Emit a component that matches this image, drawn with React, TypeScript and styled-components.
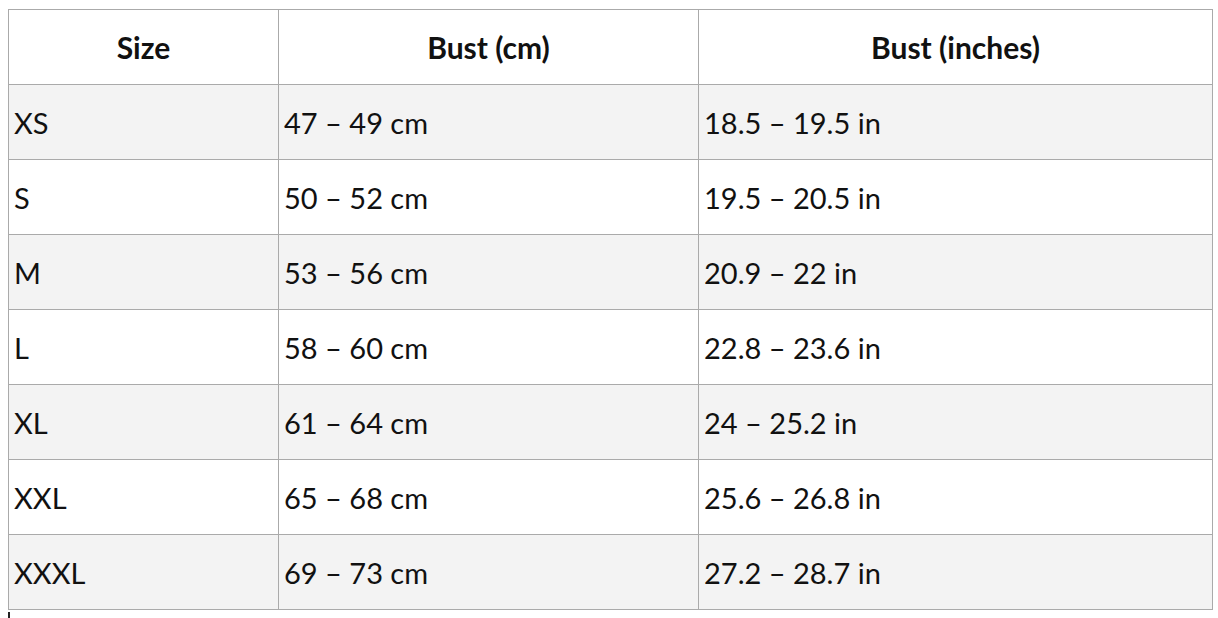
import styled, { createGlobalStyle } from 'styled-components';

const GlobalStyle = createGlobalStyle`
  html {
    overflow: hidden;
  }
  body {
    margin: 0;
    background: #fff;
    font-family: Lato, "Noto Sans", sans-serif;
    color: #111;
  }
`;

const Page = styled.div`
  width: 1218px;
  padding: 9px 0 0 8px;
  box-sizing: border-box;
`;

const Table = styled.table`
  width: 1204px;
  border-collapse: collapse;
  table-layout: fixed;
  font-size: 29px;
`;

const HeadCell = styled.th`
  height: 74px;
  padding: 0 5px;
  border: 1px solid #aaa;
  text-align: center;
  font-size: 30px;
  font-weight: 700;
  vertical-align: middle;
`;

const Row = styled.tr<{ $shaded: boolean }>`
  background: ${(p) => (p.$shaded ? '#f3f3f3' : '#fff')};
`;

const Cell = styled.td`
  height: 74px;
  padding: 0 5px;
  border: 1px solid #aaa;
  text-align: left;
  vertical-align: middle;
  white-space: nowrap;
`;

const Caret = styled.div`
  width: 2px;
  height: 6px;
  margin-top: 2px;
  background: #222;
`;

const sizes = [
  ['XS', '47 – 49 cm', '18.5 – 19.5 in'],
  ['S', '50 – 52 cm', '19.5 – 20.5 in'],
  ['M', '53 – 56 cm', '20.9 – 22 in'],
  ['L', '58 – 60 cm', '22.8 – 23.6 in'],
  ['XL', '61 – 64 cm', '24 – 25.2 in'],
  ['XXL', '65 – 68 cm', '25.6 – 26.8 in'],
  ['XXXL', '69 – 73 cm', '27.2 – 28.7 in'],
];

export default function App() {
  return (
    <Page>
      <GlobalStyle />
      <Table>
        <colgroup>
          <col style={{ width: 270 }} />
          <col style={{ width: 420 }} />
          <col style={{ width: 514 }} />
        </colgroup>
        <thead>
          <tr>
            <HeadCell>Size</HeadCell>
            <HeadCell>Bust (cm)</HeadCell>
            <HeadCell>Bust (inches)</HeadCell>
          </tr>
        </thead>
        <tbody>
          {sizes.map((row, i) => (
            <Row key={row[0]} $shaded={i % 2 === 0}>
              {row.map((value) => (
                <Cell key={value}>{value}</Cell>
              ))}
            </Row>
          ))}
        </tbody>
      </Table>
      <Caret />
    </Page>
  );
}
